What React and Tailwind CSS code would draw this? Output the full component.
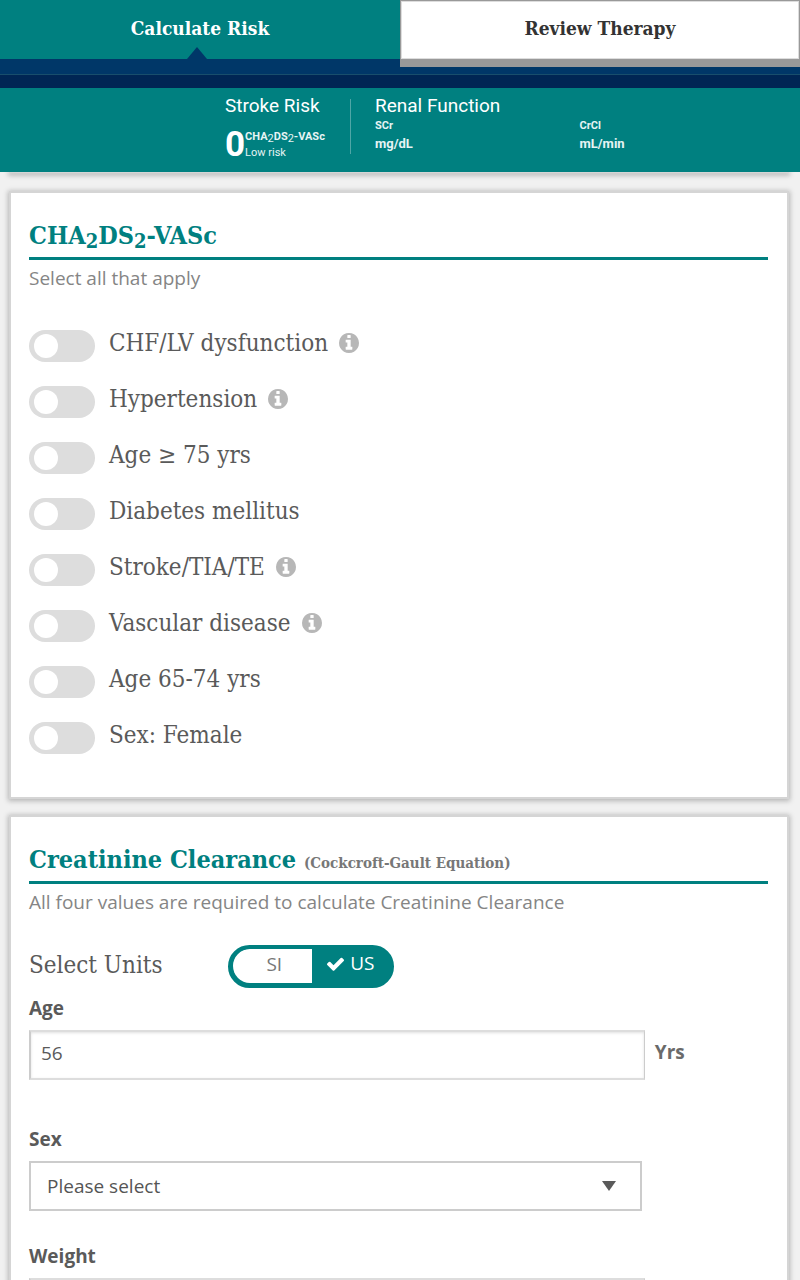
import { useId, useState } from "react";

const slab = "font-['Roboto_Slab','DejaVu_Serif_Condensed','DejaVu_Serif',serif]";

const factors = [
  { name: "CHF/LV dysfunction", info: true },
  { name: "Hypertension", info: true },
  { name: "Age ≥ 75 yrs" },
  { name: "Diabetes mellitus" },
  { name: "Stroke/TIA/TE", info: true },
  { name: "Vascular disease", info: true },
  { name: "Age 65-74 yrs" },
  { name: "Sex: Female" },
];

function InfoIcon() {
  return (
    <svg viewBox="0 128 1536 1536" className="size-5 fill-[#b7b7b7]" aria-hidden="true">
      <path d="M1024 1376v-160q0-14-9-23t-23-9h-96v-512q0-14-9-23t-23-9h-320q-14 0-23 9t-9 23v160q0 14 9 23t23 9h96v320h-96q-14 0-23 9t-9 23v160q0 14 9 23t23 9h448q14 0 23-9t9-23zm-128-896v-160q0-14-9-23t-23-9h-192q-14 0-23 9t-9 23v160q0 14 9 23t23 9h192q14 0 23-9t9-23zm640 416q0 209-103 385.5t-279.5 279.5-385.5 103-385.5-103-279.5-279.5-103-385.5 103-385.5 279.5-279.5 385.5-103 385.5 103 279.5 279.5 103 385.5z" />
    </svg>
  );
}

function CheckIcon() {
  return (
    <svg viewBox="121 284 1550 1238" className="h-[14px] w-[17px] fill-current" aria-hidden="true">
      <path d="M1671 566q0 40-28 68l-724 724-136 136q-28 28-68 28t-68-28l-136-136-362-362q-28-28-28-68t28-68l136-136q28-28 68-28t68 28l294 295 656-657q28-28 68-28t68 28l136 136q28 28 28 68z" />
    </svg>
  );
}

function Tabs() {
  return (
    <nav className={`${slab} flex h-[75px] shrink-0 items-start border-b border-[#184e6c] bg-[#003768] text-[19px] font-bold`}>
      <button type="button" className="relative h-[59px] w-1/2 bg-[#008080] pb-[3px] text-white">
        Calculate Risk
        <svg viewBox="0 0 20 12" className="absolute bottom-0 left-1/2 -ml-[13px] h-3 w-5" aria-hidden="true">
          <path d="M0 12 10 0l10 12z" fill="#003768" />
        </svg>
      </button>
      <button
        type="button"
        className="h-[67px] w-1/2 border border-b-8 border-[#999] bg-white pb-1 text-[#333] shadow-[inset_0_0_0_1px_#ddd]"
      >
        Review Therapy
      </button>
    </nav>
  );
}

function Summary() {
  return (
    <section className="flex h-[84px] shrink-0 bg-[#008080] pt-[6px] pl-[225px] font-[Roboto,sans-serif] text-[#e6f4f4]">
      <div className="w-[125px] shrink-0">
        <h2 className="text-[19px] leading-6 text-white">Stroke Risk</h2>
        <div className="mt-[9px] flex items-center">
          <span className="text-[35px] leading-9 font-bold text-white">0</span>
          <div className="text-[11px] leading-4 whitespace-nowrap">
            <p className="font-bold">
              CHA<sub className="bottom-[-2px] text-[11px] font-normal">2</sub>DS
              <sub className="bottom-[-2px] text-[11px] font-normal">2</sub>-VASc
            </p>
            <p>Low risk</p>
          </div>
        </div>
      </div>
      <div className="mt-[5px] h-[55px] w-px shrink-0 bg-[#4fa6a6]" />
      <div className="flex-1 pr-4 pl-6">
        <h2 className="text-[19px] leading-6 text-white">Renal Function</h2>
        <div className="grid grid-cols-2 font-bold">
          <div>
            <p className="text-[11px] leading-4">SCr</p>
            <p className="text-[13px] leading-5">mg/dL</p>
          </div>
          <div>
            <p className="text-[11px] leading-4">CrCl</p>
            <p className="text-[13px] leading-5">mL/min</p>
          </div>
        </div>
      </div>
    </section>
  );
}

function Card({ title, hint, children }) {
  return (
    <section className="border-2 border-[#d5d5d5] bg-white pt-6 pr-[19px] pb-[22px] pl-[18px] shadow-[0_1px_5px_1px_rgba(0,0,0,0.25)]">
      <h2 className={`${slab} h-[43px] border-b-[3px] border-[#008080] text-[25px] leading-[38px] font-bold text-[#008080]`}>
        {title}
      </h2>
      <p className="mt-1 text-[19px] leading-7 text-[#858585]">{hint}</p>
      {children}
    </section>
  );
}

function Factor({ name, info }) {
  const id = useId();
  return (
    <li className="flex h-14 items-start">
      <input
        id={id}
        type="checkbox"
        role="switch"
        className="mt-[3px] h-8 w-[66px] shrink-0 appearance-none rounded-full bg-[#ddd] p-1 before:ml-px before:block before:size-6 before:rounded-full before:bg-white checked:bg-[#008080] checked:before:ml-[33px]"
      />
      <label htmlFor={id} className={`${slab} ml-[14px] text-[24px] leading-8 text-[#5a5a5a]`}>
        {name}
      </label>
      {info && (
        <button type="button" aria-label={`About ${name}`} className="mt-[6px] ml-[11px]">
          <InfoIcon />
        </button>
      )}
    </li>
  );
}

function Units() {
  const [unit, setUnit] = useState("US");
  return (
    <div role="radiogroup" aria-label="Select Units" className="mt-[29px] flex items-center">
      <span className={`${slab} w-[199px] pb-[3px] text-[24px] leading-8 text-[#5a5a5a]`}>Select Units</span>
      <div className="flex h-[43px] w-[166px] overflow-hidden rounded-full border-4 border-[#008080] bg-[#008080] pl-px">
        {["SI", "US"].map((u) => (
          <label
            key={u}
            className={
              u === unit
                ? "relative flex w-20 items-center justify-center gap-[6px] pb-[6px] text-[19px] text-white"
                : "relative mb-px flex w-20 items-center justify-center rounded-l-full bg-white pb-1 pl-1 text-[19px] text-[#777]"
            }
          >
            <input
              type="radio"
              name="units"
              className="absolute inset-0 appearance-none"
              checked={u === unit}
              onChange={() => setUnit(u)}
            />
            {u === unit && <CheckIcon />}
            {u}
          </label>
        ))}
      </div>
    </div>
  );
}

function NumberField({ label, unit, value }) {
  const id = useId();
  return (
    <div>
      <label htmlFor={id} className="block text-[19px] leading-7 font-bold text-[#5a5a5a]">
        {label}
      </label>
      <div className="mt-2 flex items-center">
        <input
          id={id}
          type="text"
          inputMode="numeric"
          defaultValue={value}
          className="h-[50px] w-5/6 rounded-none border-2 border-r border-[#ddd] border-r-[#ccc] border-l-[#ccc] bg-white pb-1 pl-[10px] text-[19px] text-[#5a5a5a] shadow-[inset_0_1px_3px_rgba(0,0,0,0.12)]"
        />
        {unit && <span className="ml-[10px] pb-[5px] text-[19px] font-bold text-[#6a6a6a]">{unit}</span>}
      </div>
    </div>
  );
}

function SexField() {
  const id = useId();
  return (
    <div>
      <label htmlFor={id} className="block text-[19px] leading-7 font-bold text-[#5a5a5a]">
        Sex
      </label>
      <div className="relative mt-2 w-[83%]">
        <select
          id={id}
          className="h-[50px] w-full appearance-none rounded-none border-2 border-[#ccc] bg-white pl-4 text-[19px] text-[#555]"
        >
          <option>Please select</option>
          <option>Female</option>
          <option>Male</option>
        </select>
        <svg viewBox="0 0 14 10" className="pointer-events-none absolute top-5 right-[26px] h-[10px] w-[14px]" aria-hidden="true">
          <path d="M0 0h14L7 10z" fill="#5a5a5a" />
        </svg>
      </div>
    </div>
  );
}

const Sub = ({ children }) => <sub className="bottom-[-4px] text-[20px] leading-none">{children}</sub>;

export default function App() {
  return (
    <div className="flex h-screen flex-col overflow-hidden bg-[#f1f1f1] font-['Open_Sans',sans-serif]">
      <Tabs />
      <div className="h-[13px] shrink-0 bg-[#002654]" />
      <Summary />
      <main className="flex-1 overflow-y-auto pr-[11px] pl-[9px] [scrollbar-width:none]">
        <div className="h-px bg-[#d5d5d5] shadow-[0_1px_5px_1px_rgba(0,0,0,0.35)]" />
        <div className="mt-[18px] flex flex-col gap-4">
          <Card
            title={
              <>
                CHA<Sub>2</Sub>DS<Sub>2</Sub>-VASc
              </>
            }
            hint="Select all that apply"
          >
            <ul className="mt-[35px]">
              {factors.map((f) => (
                <Factor key={f.name} {...f} />
              ))}
            </ul>
          </Card>
          <Card
            title={
              <>
                Creatinine Clearance <span className="text-[15px] text-[#777]">(Cockcroft-Gault Equation)</span>
              </>
            }
            hint="All four values are required to calculate Creatinine Clearance"
          >
            <Units />
            <div className="mt-[6px] flex flex-col gap-[31px]">
              <div className="pb-[14px]">
                <NumberField label="Age" unit="Yrs" value="56" />
              </div>
              <SexField />
              <NumberField label="Weight" />
            </div>
          </Card>
        </div>
      </main>
    </div>
  );
}
